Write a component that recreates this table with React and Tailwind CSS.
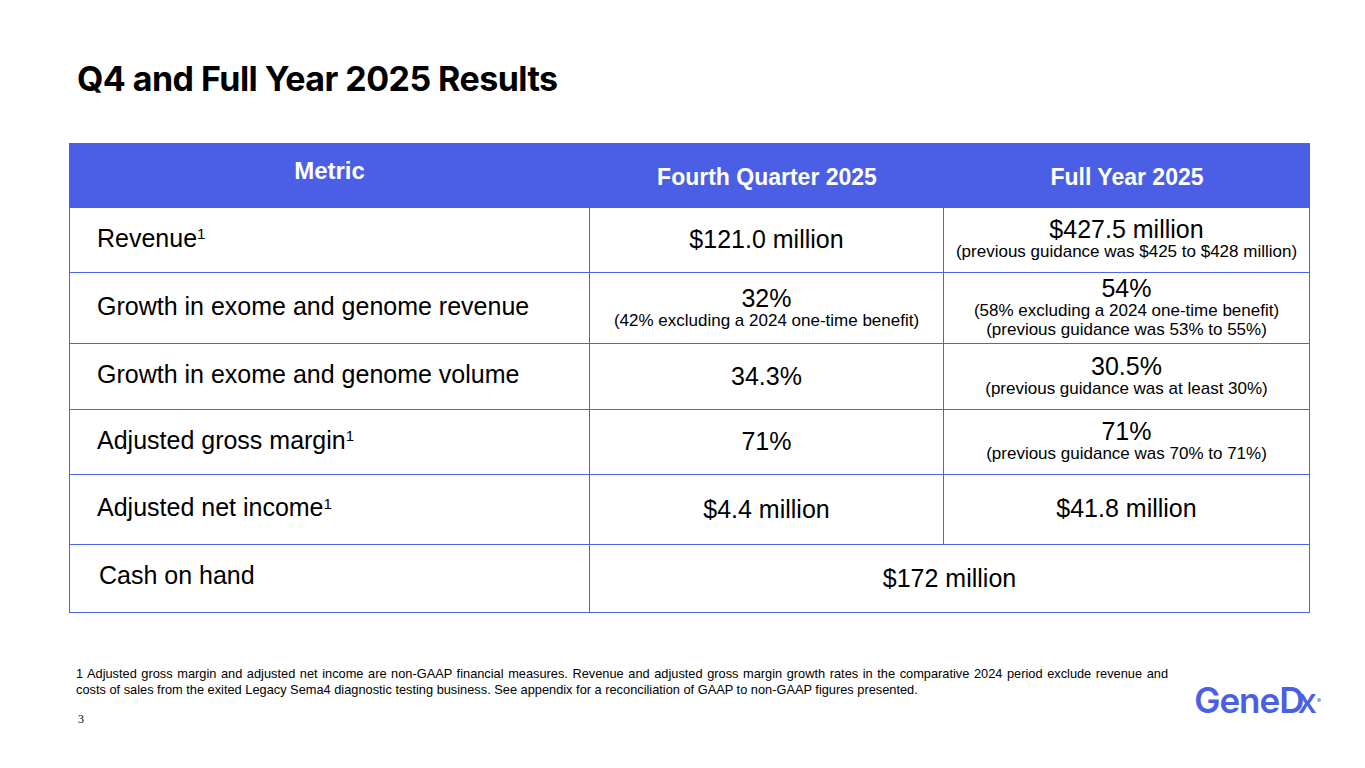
export default function App() {
  const sub = "text-[17px] leading-[19px]";
  const rows = [
    {
      label: (
        <>
          Revenue<sup className="text-[15px]">1</sup>
        </>
      ),
      q4: [<span key="a">$121.0 million</span>],
      fy: [
        <span key="a">$427.5 million</span>,
        <span key="b" className={sub}>(previous guidance was $425 to $428 million)</span>,
      ],
    },
    {
      label: "Growth in exome and genome revenue",
      q4: [
        <span key="a">32%</span>,
        <span key="b" className={sub}>(42% excluding a 2024 one-time benefit)</span>,
      ],
      fy: [
        <span key="a">54%</span>,
        <span key="b" className={sub}>(58% excluding a 2024 one-time benefit)</span>,
        <span key="c" className={sub}>(previous guidance was 53% to 55%)</span>,
      ],
    },
    {
      label: "Growth in exome and genome volume",
      q4: [<span key="a">34.3%</span>],
      fy: [
        <span key="a">30.5%</span>,
        <span key="b" className={sub}>(previous guidance was at least 30%)</span>,
      ],
    },
    {
      label: (
        <>
          Adjusted gross margin<sup className="text-[15px]">1</sup>
        </>
      ),
      q4: [<span key="a">71%</span>],
      fy: [
        <span key="a">71%</span>,
        <span key="b" className={sub}>(previous guidance was 70% to 71%)</span>,
      ],
    },
    {
      label: (
        <>
          Adjusted net income<sup className="text-[15px]">1</sup>
        </>
      ),
      q4: [<span key="a">$4.4 million</span>],
      fy: [<span key="a">$41.8 million</span>],
    },
  ];
  const heights = ["h-[65px]", "h-[71px]", "h-[66px]", "h-[65px]", "h-[70px]"];

  return (
    <div className="w-[1365px] h-[768px] bg-white overflow-hidden text-black">
      <h1 className="ml-[77px] pt-[57px] h-[143px] font-['Inter',sans-serif] font-bold text-[34px] leading-[44px] tracking-[-0.55px]">
        Q4 and Full Year 2025 Results
      </h1>

      <div className="ml-[69px] w-[1241px] font-['Liberation_Sans',Arial,sans-serif]">
        <div className="flex h-[65px] bg-[#4a5fe6] text-white font-bold">
          <div className="w-[521px] flex items-center justify-center text-[24px] pb-[9px]">Metric</div>
          <div className="w-[354px] flex items-center justify-center text-[23px] pt-[4px]">Fourth Quarter 2025</div>
          <div className="flex-1 flex items-center justify-center text-[23px] pt-[4px]">Full Year 2025</div>
        </div>

        <div className="border-l-[1.5px] border-[#4f63e6]">
          {rows.map((r, i) => (
            <div key={i} className={`flex ${heights[i]} border-b-[1.5px] border-[#4f63e6]`}>
              <div className="w-[520px] flex items-center pl-[27px] text-[25px] pb-[3px] border-r-[1.5px] border-[#4f63e6]">
                <span>{r.label}</span>
              </div>
              <div className="w-[354px] flex flex-col items-center justify-center text-[25px] leading-[26px] pb-[2px] border-r-[1.5px] border-[#4f63e6]">
                {r.q4}
              </div>
              <div className="flex-1 flex flex-col items-center justify-center text-[25px] leading-[26px] pb-[3px] border-r-[1.5px] border-[#4f63e6]">
                {r.fy}
              </div>
            </div>
          ))}
          <div className="flex h-[68px] border-b-[1.5px] border-[#4f63e6]">
            <div className="w-[520px] flex items-center pl-[29px] text-[25px] pb-[6px] border-r-[1.5px] border-[#4f63e6]">
              Cash on hand
            </div>
            <div className="flex-1 flex items-center justify-center text-[25px] border-r-[1.5px] border-[#4f63e6]">
              $172 million
            </div>
          </div>
        </div>
      </div>

      <div className="flex mt-[53px] font-['Liberation_Sans',Arial,sans-serif]">
        <div className="ml-[76px] w-[1092px] text-[12.8px] leading-[16px]">
          <p className="text-justify [text-align-last:justify] whitespace-nowrap">
            1 Adjusted gross margin and adjusted net income are non-GAAP financial measures. Revenue and adjusted gross margin growth rates in the comparative 2024 period exclude revenue and
          </p>
          <p>
            costs of sales from the exited Legacy Sema4 diagnostic testing business. See appendix for a reconciliation of GAAP to non-GAAP figures presented.
          </p>
        </div>
        <div className="ml-auto mr-[44px] mt-[15px] text-[#4a5fe6] font-['Inter',sans-serif] font-semibold text-[35px] leading-[38px] tracking-[-1px] whitespace-nowrap">
          Gene<span className="tracking-[-7px]">D</span>
          <span className="font-medium">x</span>
          <sup className="text-[6px] tracking-normal -top-[1.6em] ml-[1px]">®</sup>
        </div>
      </div>
      <div className="ml-[78px] -mt-[8px] font-['Liberation_Serif',serif] text-[12px] leading-[16px]">3</div>
    </div>
  );
}
